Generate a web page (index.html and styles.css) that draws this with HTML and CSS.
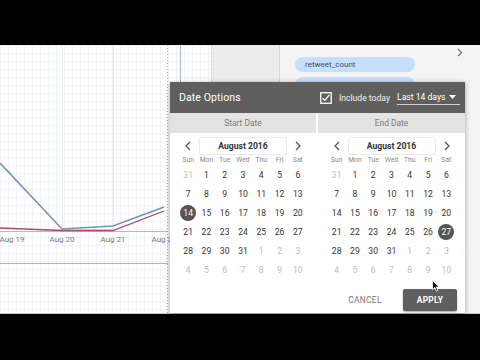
FILE: index.html
```html
<!DOCTYPE html>
<html lang="en">
<head>
<meta charset="utf-8">
<title>Date Options</title>
<link rel="stylesheet" href="styles.css">
</head>
<body>
<div class="screen">
  <div class="letterbox"></div>
  <div class="workspace">
    <div class="canvas">
      <div class="page">
        <svg class="chart" width="212" height="268" viewBox="0 0 212 268">
          <line x1="62.5" y1="0" x2="62.5" y2="186" class="major"/>
          <line x1="113.5" y1="0" x2="113.5" y2="186" class="major"/>
          <line x1="167.5" y1="0" x2="167.5" y2="268" class="dotted"/>
          <line x1="180.5" y1="0" x2="180.5" y2="218" class="frame"/>
          <line x1="0" y1="218.5" x2="168" y2="218.5" class="frame"/>
          <line x1="0" y1="186.5" x2="167" y2="186.5" class="axis"/>
          <polyline points="0,118 62,184 113,181 164,162" class="series-blue"/>
          <polyline points="0,183 62,185.5 113,185.5 164,166" class="series-red"/>
          <text x="12" y="197" class="tick">Aug 19</text>
          <text x="62" y="197" class="tick">Aug 20</text>
          <text x="113" y="197" class="tick">Aug 21</text>
          <text x="164" y="197" class="tick">Aug 22</text>
        </svg>
      </div>
      <div class="outside"></div>
    </div>
    <aside class="panel">
      <div class="panel-head">
        <svg width="6" height="9" viewBox="0 0 6 9"><path d="M1 1l3.5 3.5L1 8" fill="none" stroke="#777" stroke-width="1.3"/></svg>
      </div>
      <div class="pill">retweet_count</div>
      <div class="pill"></div>
    </aside>

    <div class="dialog">
      <div class="dlg-head">
        <span class="dlg-title">Date Options</span>
        <span class="check">
          <svg width="12" height="12" viewBox="0 0 12 12"><rect x="0.75" y="0.75" width="10.5" height="10.5" fill="none" stroke="#fff" stroke-width="1.3"/><path d="M2.6 6.2l2.2 2.2 4.6-5.6" fill="none" stroke="#fff" stroke-width="1.3"/></svg>
        </span>
        <span class="inc">Include today</span>
        <span class="select">Last 14 days<svg width="7" height="4" viewBox="0 0 7 4"><path d="M0 0h7L3.5 4z" fill="#fff"/></svg></span>
      </div>
      <div class="tabs">
        <div class="tab">Start Date</div>
        <div class="tab">End Date</div>
      </div>
      <div class="cals">
        <div class="cal">
          <div class="nav">
            <span class="chev"><svg width="6" height="10" viewBox="0 0 6 10"><path d="M5 1L1 5l4 4" fill="none" stroke="#555" stroke-width="1.3"/></svg></span>
            <span class="month">August 2016</span>
            <span class="chev"><svg width="6" height="10" viewBox="0 0 6 10"><path d="M1 1l4 4-4 4" fill="none" stroke="#555" stroke-width="1.3"/></svg></span>
          </div>
          <div class="dow"><span>Sun</span><span>Mon</span><span>Tue</span><span>Wed</span><span>Thu</span><span>Fri</span><span>Sat</span></div>
          <div class="days">
            <span class="o">31</span><span>1</span><span>2</span><span>3</span><span>4</span><span>5</span><span>6</span>
            <span>7</span><span>8</span><span>9</span><span>10</span><span>11</span><span>12</span><span>13</span>
            <span class="sel"><b>14</b></span><span>15</span><span>16</span><span>17</span><span>18</span><span>19</span><span>20</span>
            <span>21</span><span>22</span><span>23</span><span>24</span><span>25</span><span>26</span><span>27</span>
            <span>28</span><span>29</span><span>30</span><span>31</span><span class="o">1</span><span class="o">2</span><span class="o">3</span>
            <span class="o">4</span><span class="o">5</span><span class="o">6</span><span class="o">7</span><span class="o">8</span><span class="o">9</span><span class="o">10</span>
          </div>
        </div>
        <div class="cal">
          <div class="nav">
            <span class="chev"><svg width="6" height="10" viewBox="0 0 6 10"><path d="M5 1L1 5l4 4" fill="none" stroke="#555" stroke-width="1.3"/></svg></span>
            <span class="month">August 2016</span>
            <span class="chev"><svg width="6" height="10" viewBox="0 0 6 10"><path d="M1 1l4 4-4 4" fill="none" stroke="#555" stroke-width="1.3"/></svg></span>
          </div>
          <div class="dow"><span>Sun</span><span>Mon</span><span>Tue</span><span>Wed</span><span>Thu</span><span>Fri</span><span>Sat</span></div>
          <div class="days">
            <span class="o">31</span><span>1</span><span>2</span><span>3</span><span>4</span><span>5</span><span>6</span>
            <span>7</span><span>8</span><span>9</span><span>10</span><span>11</span><span>12</span><span>13</span>
            <span>14</span><span>15</span><span>16</span><span>17</span><span>18</span><span>19</span><span>20</span>
            <span>21</span><span>22</span><span>23</span><span>24</span><span>25</span><span>26</span><span class="sel"><b>27</b></span>
            <span>28</span><span>29</span><span>30</span><span>31</span><span class="o">1</span><span class="o">2</span><span class="o">3</span>
            <span class="o">4</span><span class="o">5</span><span class="o">6</span><span class="o">7</span><span class="o">8</span><span class="o">9</span><span class="o">10</span>
          </div>
        </div>
      </div>
      <div class="dlg-foot">
        <span class="btn cancel">CANCEL</span>
        <span class="btn apply">APPLY</span>
      </div>
      <svg class="cursor" width="8" height="12" viewBox="0 0 8 12"><path d="M0.5 0.5v9l2.3-2 1.6 3.6 1.4-.6-1.6-3.5H7.2z" fill="#111" stroke="#fff" stroke-width="0.8"/></svg>
    </div>
  </div>
  <div class="edge"></div>
  <div class="letterbox"></div>
</div>
</body>
</html>
```

FILE: styles.css
```css
* { box-sizing: border-box; }
html, body { margin: 0; padding: 0; }
body {
  width: 480px;
  height: 360px;
  background: #000;
  font-family: Roboto, "Noto Sans", "Liberation Sans", sans-serif;
  overflow: hidden;
}
.screen { display: flex; flex-direction: column; width: 480px; height: 360px; }
.letterbox { flex: 1; background: #000; }
.letterbox:first-child { flex: 0 0 45px; }
.workspace {
  position: relative;
  height: 268px;
  display: flex;
  background: #f4f4f4;
}
.edge { height: 1px; background: #c9c9c9; }

/* report canvas */
.canvas { width: 280px; display: flex; }
.page {
  width: 212px;
  background-color: #fff;
  background-image:
    linear-gradient(to right, rgba(210,218,230,0.32) 1px, transparent 1px),
    linear-gradient(to bottom, rgba(210,218,230,0.32) 1px, transparent 1px);
  background-size: 8px 8px;
  border-right: 1px solid #dcdcdc;
}
.chart { display: block; }
.chart .major { stroke: #e6e9ee; stroke-width: 1; }
.chart .dotted { stroke: #9fb4cb; stroke-width: 1; stroke-dasharray: 1 2; }
.chart .frame { stroke: #a3b8cf; stroke-width: 1; }
.chart .axis { stroke: #b9b9b9; stroke-width: 1; }
.chart .series-blue { fill: none; stroke: #7393bd; stroke-width: 1.6; }
.chart .series-red { fill: none; stroke: #b5495a; stroke-width: 1.3; }
.chart .tick { font-size: 8px; fill: #7a7a7a; text-anchor: middle; font-family: Roboto, "Liberation Sans", sans-serif; }
.outside { flex: 1; background: #ececec; border-right: 1px solid #d6d6d6; }

/* side panel */
.panel {
  flex: 1;
  background: #f4f4f4;
  padding: 0 0 0 15px;
}
.panel-head { height: 12px; display: flex; justify-content: flex-end; align-items: flex-end; padding-right: 17px; }
.pill {
  width: 120px;
  height: 15px;
  border-radius: 8px;
  background: #c7e0fa;
  color: #3b4c6a;
  font-size: 8px;
  line-height: 15px;
  padding-left: 10px;
  margin-bottom: 5px;
}

/* dialog */
.dialog {
  position: absolute;
  left: 170px;
  top: 37px;
  width: 295px;
  height: 231px;
  background: #fff;
  box-shadow: 0 1px 5px rgba(0,0,0,0.35);
  display: flex;
  flex-direction: column;
}
.dlg-head {
  height: 31px;
  background: #5f5f5f;
  display: flex;
  align-items: center;
  padding: 0 5px 0 9px;
  color: #fff;
}
.dlg-title { font-size: 10.5px; letter-spacing: 0.1px; }
.check { margin-left: auto; display: flex; }
.inc { font-size: 8.6px; margin-left: 7px; color: #f2f2f2; }
.select {
  margin-left: 7px;
  width: 63px;
  font-size: 8.6px;
  padding: 1px 4px 2px 0;
  border-bottom: 1px solid #cfcfcf;
  display: flex;
  align-items: center;
  justify-content: space-between;
}
.tabs {
  display: grid;
  grid-template-columns: 146px 147px;
  column-gap: 2px;
  height: 20px;
}
.tab {
  background: #e3e3e3;
  color: #7d7d7d;
  font-size: 8.4px;
  display: flex;
  align-items: center;
  justify-content: center;
}
.cals {
  display: grid;
  grid-template-columns: 146px 147px;
  column-gap: 2px;
}
.cal { padding-top: 4px; }
.nav {
  height: 18px;
  display: flex;
  justify-content: center;
  align-items: center;
  gap: 2px;
}
.chev { width: 18px; display: flex; justify-content: center; }
.month {
  width: 88px;
  height: 18px;
  border: 1px solid #ebebeb;
  border-radius: 2px;
  font-size: 8.6px;
  font-weight: 700;
  color: #333;
  display: flex;
  align-items: center;
  justify-content: center;
}
.dow, .days {
  width: 128px;
  margin: 0 auto;
  display: grid;
  grid-template-columns: repeat(7, 1fr);
}
.dow { height: 10px; font-size: 6.8px; color: #8a8a8a; }
.dow span { text-align: center; line-height: 10px; }
.days { grid-auto-rows: 19px; font-size: 8.6px; color: #333; }
.days span { display: flex; align-items: center; justify-content: center; }
.days .o { color: #bdbdbd; }
.days .sel b {
  width: 16px;
  height: 16px;
  border-radius: 50%;
  background: #555;
  color: #fff;
  font-weight: 400;
  display: flex;
  align-items: center;
  justify-content: center;
}
.dlg-foot {
  flex: 1;
  display: flex;
  justify-content: flex-end;
  align-items: flex-end;
  padding: 0 8px 2px 0;
  gap: 11px;
}
.btn {
  width: 54px;
  height: 22px;
  font-size: 8.4px;
  letter-spacing: 0.3px;
  display: flex;
  align-items: center;
  justify-content: center;
  border-radius: 2px;
}
.cancel { color: #777; }
.apply { background: #5f5f5f; color: #fff; font-weight: 700; box-shadow: 0 1px 2px rgba(0,0,0,0.35); }
.cursor { position: absolute; left: 262px; top: 198px; }
```
